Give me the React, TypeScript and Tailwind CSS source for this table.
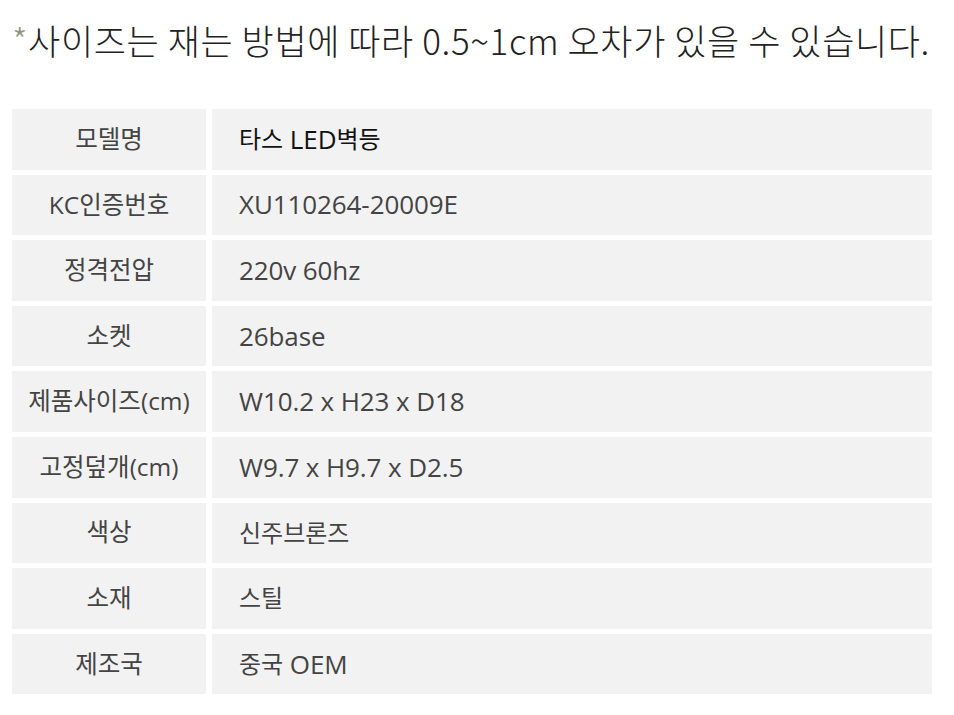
const rows: [string, string][] = [
  ["모델명", "타스 LED벽등"],
  ["KC인증번호", "XU110264-20009E"],
  ["정격전압", "220v 60hz"],
  ["소켓", "26base"],
  ["제품사이즈(cm)", "W10.2 x H23 x D18"],
  ["고정덮개(cm)", "W9.7 x H9.7 x D2.5"],
  ["색상", "신주브론즈"],
  ["소재", "스틸"],
  ["제조국", "중국 OEM"],
];

// latin runs in the value column are set a bit larger than the hangul
function Value({ text }: { text: string }) {
  const parts = text.split(/([\uac00-\ud7a3]+)/).filter(Boolean);
  return (
    <>
      {parts.map((p, i) =>
        /[\uac00-\ud7a3]/.test(p) ? (
          <span key={i}>{p}</span>
        ) : (
          <span key={i} className="text-[26px] tracking-[-0.1px]">{p}</span>
        ),
      )}
    </>
  );
}

export default function App() {
  return (
    <div className="h-[715px] w-[954px] bg-white">
      <p className="pl-[12px] pt-[14px] font-['Noto_Sans_CJK_KR',sans-serif] text-[35px] font-light leading-[52px] tracking-[0.6px] text-[#222]">
        <span className="text-[#8d9484]">*</span>사이즈는 재는 방법에 따라 0.5~1cm 오차가 있을 수 있습니다.
      </p>
      <div className="mt-[43px] ml-[12px] grid w-[920px] grid-cols-[194px_1fr] gap-x-[6px] gap-y-[5px] font-['Open_Sans','Noto_Sans_CJK_KR',sans-serif]">
        {rows.map(([label, value], i) => (
          <div key={label} className="contents">
            <div className="flex h-[60.6px] items-center justify-center bg-[#f2f2f2] text-[24.5px] text-[#444]">{label}</div>
            <div className={`flex h-[60.6px] items-center whitespace-pre bg-[#f2f2f2] pl-[27px] text-[24px] ${i === 0 ? "text-[#111]" : "text-[#444]"}`}>
              <Value text={value} />
            </div>
          </div>
        ))}
      </div>
    </div>
  );
}
